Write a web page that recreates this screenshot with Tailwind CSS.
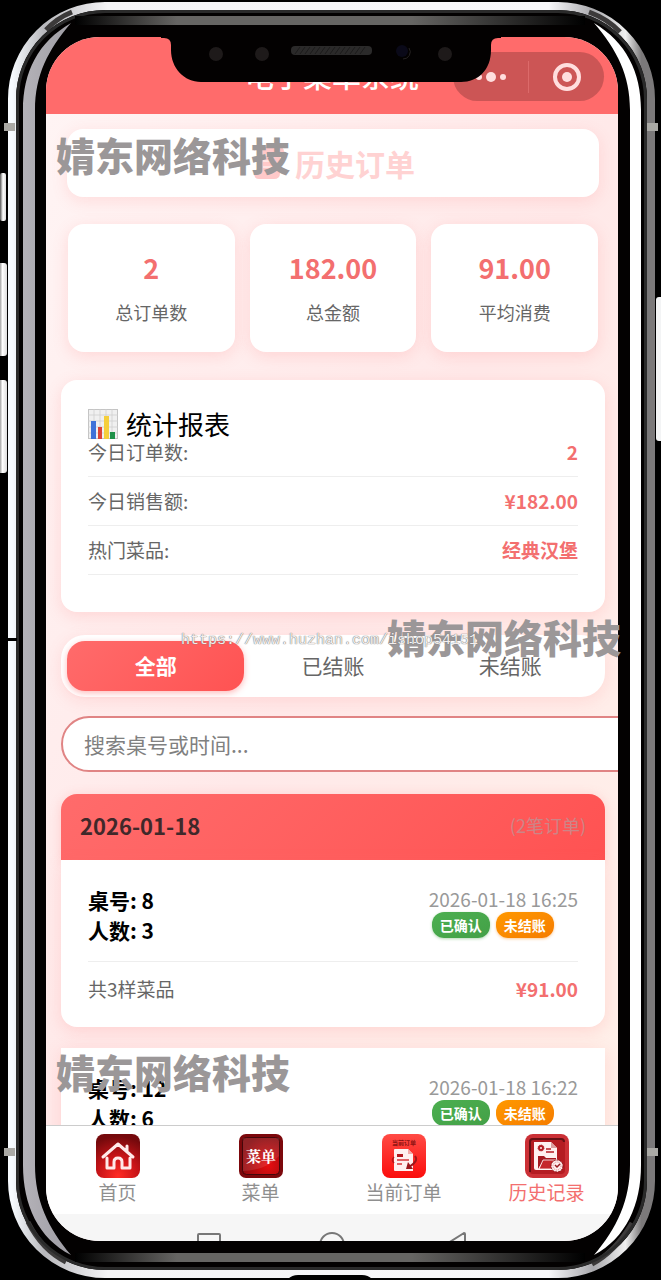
<!DOCTYPE html>
<html lang="zh-CN">
<head>
<meta charset="UTF-8" />
<meta name="viewport" content="width=device-width, initial-scale=1" />
<title>电子菜单系统</title>
<script src="https://cdn.jsdelivr.net/npm/@tailwindcss/browser@4"></script>
</head>
<body class="bg-black font-['Noto_Sans_CJK_SC',sans-serif]">

<div class="relative h-screen overflow-hidden bg-black pt-[37px] pr-[43px] pb-[39px] pl-[46px]">

  <!-- Phone frame -->
  <svg class="absolute inset-0 w-full h-full" viewBox="0 0 661 1280" preserveAspectRatio="none" aria-hidden="true">
    <defs>
      <linearGradient id="ring" x1="0" x2="1">
        <stop offset="0" stop-color="#f7fbff" /><stop offset=".05" stop-color="#b8b8bc" /><stop offset=".15" stop-color="#f4f4f6" />
        <stop offset=".84" stop-color="#f8f8fa" /><stop offset=".91" stop-color="#a8a8ac" /><stop offset=".96" stop-color="#f0f0f0" /><stop offset=".985" stop-color="#7b797a" />
      </linearGradient>
      <linearGradient id="strip" x1="0" x2="1">
        <stop offset="0" stop-color="#000" /><stop offset=".2" stop-color="#666563" />
        <stop offset=".66" stop-color="#666563" /><stop offset="1" stop-color="#000" />
      </linearGradient>
      <linearGradient id="left" x1="0" x2="1">
        <stop offset="0" stop-color="#b4b2b8" /><stop offset="1" stop-color="#9f9da4" />
      </linearGradient>
      <linearGradient id="key" x1="0" x2="1">
        <stop offset="0" stop-color="#555" /><stop offset=".5" stop-color="#fff" /><stop offset="1" stop-color="#ddd" />
      </linearGradient>
    </defs>
    <rect x="12" y="6" width="639" height="1268" rx="93" fill="#030101" stroke="url(#ring)" stroke-width="8" />
    <path d="M46 30Q57 18 72 12M589 12Q608 19 620 32M28 1222Q42 1250 66 1262M632 1223Q615 1252 592 1264" fill="none" stroke="#3c3a3a" stroke-width="5" />
    <rect x="17.500" y="11.500" width="628" height="1257" rx="88" fill="none" stroke="#2a2a2a" stroke-width="3" />
    <rect x="75" y="16" width="510" height="9" fill="url(#strip)" />
    <rect x="75" y="1253" width="510" height="9" fill="url(#strip)" />
    <path d="M71 23C38 42 23 72 23 110V1165C23 1205 38 1238 71 1255C48 1228 35 1200 35 1165V110C35 75 48 50 71 23Z" fill="url(#left)" />
    <path d="M594 23C626 42 641 72 641 110V1165C641 1205 626 1238 594 1255C617 1228 630 1200 630 1165V110C630 75 617 50 594 23Z" fill="#fff" />
    <rect x="0" y="173" width="6" height="48" rx="2" fill="url(#key)" />
    <rect x="-2" y="263" width="9" height="93" rx="3" fill="url(#key)" />
    <rect x="-2" y="380" width="9" height="93" rx="3" fill="url(#key)" />
    <rect x="656" y="297" width="8" height="144" rx="3" fill="#f3f4f5" />
    <path d="M4 123h11v8H4zM647 123h11v8h-11zM4 1148h11v8H4zM647 1148h11v8h-11z" fill="#aaa9a5" />
    <path d="M8 638h9v3H8z" fill="#000" />
    <path d="M288 1279q4-4 10-4h64q6 0 10 4z" fill="#000" />
  </svg>

  <!-- Screen -->
  <div class="relative h-full flex flex-col overflow-hidden rounded-[54px] bg-[#ffefef]">

    <header class="relative shrink-0 h-[77px] bg-[#ff6b6b] flex justify-center">
      <h1 class="pt-[17px] text-[29px] leading-[42px] font-medium text-white">电子菜单系统</h1>

      <!-- Mini program capsule -->
      <div class="absolute right-[14px] top-[15px] w-[151px] h-[49px] rounded-full bg-[#cc5555] flex items-center">
        <button aria-label="更多" class="flex-1 flex justify-center">
          <svg class="w-8 h-6" viewBox="0 0 32 24" fill="#ffdede"><circle cx="4" cy="12" r="3" /><circle cx="16" cy="12" r="5" /><circle cx="28" cy="12" r="3" /></svg>
        </button>
        <span class="w-px h-8 bg-[#dc6a6a]"></span>
        <button aria-label="关闭" class="flex-1 flex justify-center">
          <svg class="w-8 h-8" viewBox="0 0 32 32"><circle cx="16" cy="16" r="12" fill="none" stroke="#ffdede" stroke-width="4" /><circle cx="16" cy="16" r="5" fill="#ffdede" /></svg>
        </button>
      </div>

      <!-- Notch -->
      <svg class="absolute top-0 left-1/2 -translate-x-1/2 -ml-[1px] w-[340px] h-[46px]" viewBox="0 0 340 46" aria-hidden="true">
        <path d="M0 0H340V1H337Q330 1 330 8V13C330 33 317 45 300 45H40C23 45 10 31 10 13V8Q10 1 3 1H0Z" fill="#030101" />
        <g fill="#1e1a1a"><circle cx="55" cy="17" r="7" /><circle cx="101" cy="17" r="7" /><circle cx="284" cy="17" r="7" /></g>
        <rect x="130" y="9" width="81" height="9" rx="4" fill="#2b2a2a" />
        <path d="M134 17l5-7m0 7l5-7m0 7l5-7m0 7l5-7m0 7l5-7m0 7l5-7m0 7l5-7m0 7l5-7m0 7l5-7m0 7l5-7m0 7l5-7m0 7l5-7m0 7l5-7m0 7l5-7" stroke="#1c1b1b" fill="none" />
        <circle cx="241" cy="14" r="6" fill="#0a0918" /><path d="M248 11a7 7 0 0 1-6 11" fill="none" stroke="#262323" />
      </svg>
    </header>

    <main class="flex-1 min-h-0 overflow-hidden pt-[15px] pl-[15px] pr-[13px] bg-linear-to-br from-[#fff4f4] via-[#ffe9e9] to-[#fff0e9]">

      <!-- Page title -->
      <div class="mx-[6px] h-[68px] rounded-2xl bg-white shadow-[0_4px_16px_rgba(255,107,107,0.16)] flex items-center justify-center gap-2">
        <svg class="w-9 h-9" viewBox="-2 0 36 36" aria-hidden="true">
          <path d="M6 2h20q5 0 5 5v3h-4v18q0 6-6 6H6q-5 0-5-6h4V7Q5 3 1 6 2 2 6 2z" fill="#ffc9c9" />
          <path d="M10 10h12M10 16h12M10 22h12" stroke="#ffe3e3" stroke-width="2" />
        </svg>
        <h2 class="text-[30px] leading-9 font-bold text-[#ffd2d2]">历史订单</h2>
      </div>

      <!-- Totals -->
      <div class="mt-[27px] mx-[7px] grid grid-cols-3 gap-[15px] text-center">
        <div class="h-[128px] rounded-2xl bg-white shadow-[0_4px_16px_rgba(255,107,107,0.18)] pt-6">
          <div class="text-[27px] leading-10 font-bold text-[#f36f6f]">2</div>
          <div class="mt-3 text-[18px] leading-6 text-[#666]">总订单数</div>
        </div>
        <div class="h-[128px] rounded-2xl bg-white shadow-[0_4px_16px_rgba(255,107,107,0.18)] pt-6">
          <div class="text-[27px] leading-10 font-bold text-[#f36f6f]">182.00</div>
          <div class="mt-3 text-[18px] leading-6 text-[#666]">总金额</div>
        </div>
        <div class="h-[128px] rounded-2xl bg-white shadow-[0_4px_16px_rgba(255,107,107,0.18)] pt-6">
          <div class="text-[27px] leading-10 font-bold text-[#f36f6f]">91.00</div>
          <div class="mt-3 text-[18px] leading-6 text-[#666]">平均消费</div>
        </div>
      </div>

      <!-- Report -->
      <section class="mt-[28px] rounded-2xl bg-white shadow-[0_4px_16px_rgba(255,107,107,0.18)] px-[27px] pt-[27px] pb-[37px]">
        <div class="flex items-center gap-2 h-[33px]">
          <svg class="w-[30px] h-[30px]" viewBox="0 0 30 30" aria-hidden="true">
            <rect x=".5" y=".5" width="29" height="29" fill="#f0f0f0" stroke="#c4c4c4" />
            <path d="M0 6h30M0 12h30M0 18h30M0 24h30M6 0v30M12 0v30M18 0v30M24 0v30" stroke="#cfcfcf" stroke-width=".8" />
            <path d="M3 12h5v18H3z" fill="#3f72d8" /><path d="M10 18h4v12h-4z" fill="#db4437" />
            <path d="M16 7h5v23h-5z" fill="#f5cf3b" /><path d="M22 23h5v7h-5z" fill="#1f9149" />
          </svg>
          <h3 class="text-[26px] leading-8 text-black">统计报表</h3>
        </div>
        <dl class="text-[19px] leading-6">
          <div class="flex justify-between pb-3 border-b border-[#eee]"><dt class="text-[#666]">今日订单数:</dt><dd class="font-bold text-[#f36f6f]">2</dd></div>
          <div class="flex justify-between py-3 border-b border-[#eee]"><dt class="text-[#666]">今日销售额:</dt><dd class="font-bold text-[#f36f6f]">¥182.00</dd></div>
          <div class="flex justify-between py-3 border-b border-[#eee]"><dt class="text-[#666]">热门菜品:</dt><dd class="font-bold text-[#f36f6f]">经典汉堡</dd></div>
        </dl>
      </section>

      <!-- Filter tabs -->
      <div class="mt-[23px] h-[62px] p-[6px] rounded-[24px] bg-white shadow-[0_4px_16px_rgba(255,107,107,0.15)] grid grid-cols-3 text-[21px]">
        <button class="rounded-[18px] bg-linear-135 from-[#ff6b6b] to-[#ff5252] font-bold text-white shadow-[0_2px_6px_rgba(255,82,82,0.4)]">全部</button>
        <button class="text-[#666]">已结账</button>
        <button class="text-[#666]">未结账</button>
      </div>

      <input type="text" aria-label="搜索桌号或时间" placeholder="搜索桌号或时间..." class="block mt-[19px] w-[calc(100%+48px)] h-[56px] rounded-full border-2 border-[#e08484] bg-white px-[21px] text-[21px] placeholder:text-[#808080]" />

      <!-- Orders of the day -->
      <section class="mt-[22px]">
        <div class="h-[66px] rounded-t-2xl bg-linear-135 from-[#ff6b6b] to-[#ff5252] shadow-[0_2px_12px_rgba(255,107,107,0.25)] px-[19px] pb-1 flex items-center justify-between">
          <h3 class="text-[22px] leading-8 font-bold text-[#40282a]">2026-01-18</h3>
          <span class="text-[18px] leading-8 text-[#cc8587]">(2笔订单)</span>
        </div>

        <article class="rounded-b-2xl bg-white shadow-[0_4px_16px_rgba(255,107,107,0.18)] px-[27px] pt-[25px] pb-[26px]">
          <div class="flex justify-between pb-4 border-b border-[#eee]">
            <div class="text-[21px] leading-[30px] font-bold text-black">
              <p>桌号: 8</p>
              <p>人数: 3</p>
            </div>
            <div class="pt-[2px]">
              <time class="block text-[19px] leading-6 text-[#999]">2026-01-18 16:25</time>
              <div class="flex gap-[6px] pl-[3px] pt-px text-[14px] leading-[26px] font-bold text-white text-center">
                <span class="px-2 rounded-xl bg-linear-to-br from-[#4caf50] to-[#43a047] shadow-[0_1px_3px_rgba(67,160,71,0.4)]">已确认</span>
                <span class="px-2 rounded-xl bg-linear-to-br from-[#ff9800] to-[#f57c00] shadow-[0_1px_3px_rgba(245,124,0,0.4)]">未结账</span>
              </div>
            </div>
          </div>
          <div class="flex justify-between pt-[15px] text-[19px] leading-6">
            <span class="text-[#666]">共3样菜品</span>
            <span class="font-bold text-[#f36f6f]">¥91.00</span>
          </div>
        </article>

        <article class="mt-[21px] bg-white shadow-[0_4px_16px_rgba(255,107,107,0.18)] px-[27px] pt-[25px] pb-[26px]">
          <div class="flex justify-between pb-4 border-b border-[#eee]">
            <div class="text-[21px] leading-[30px] font-bold text-black">
              <p>桌号: 12</p>
              <p>人数: 6</p>
            </div>
            <div class="pt-[2px]">
              <time class="block text-[19px] leading-6 text-[#999]">2026-01-18 16:22</time>
              <div class="flex gap-[6px] pl-[3px] pt-px text-[14px] leading-[26px] font-bold text-white text-center">
                <span class="px-2 rounded-xl bg-linear-to-br from-[#4caf50] to-[#43a047]">已确认</span>
                <span class="px-2 rounded-xl bg-linear-to-br from-[#ff9800] to-[#f57c00]">未结账</span>
              </div>
            </div>
          </div>
        </article>
      </section>
    </main>

    <!-- Tab bar -->
    <nav class="shrink-0 h-[89px] border-t border-[#ccc] bg-white grid grid-cols-4 text-[19px] leading-[26px] text-[#8f8f8f]">
      <a href="#" class="flex flex-col items-center pt-2">
        <svg class="w-11 h-11" viewBox="0 0 44 44" aria-hidden="true">
          <defs><radialGradient id="home" cx=".5" cy=".95" r=".9"><stop offset="0" stop-color="#ff2c25" /><stop offset=".5" stop-color="#c81418" /><stop offset="1" stop-color="#75090c" /></radialGradient></defs>
          <rect width="44" height="44" rx="8" fill="url(#home)" />
          <path d="M7 23L22 10L37 23M31 12V17M11 24V34H18V28Q18 24 22 24Q26 24 26 28V34H34V24" fill="none" stroke="#ffe9e9" stroke-width="3" stroke-linecap="round" stroke-linejoin="round" />
        </svg>
        <span class="mt-[1px]">首页</span>
      </a>
      <a href="#" class="flex flex-col items-center pt-2">
        <svg class="w-11 h-11" viewBox="0 0 44 44" aria-hidden="true">
          <defs><radialGradient id="menu" cx=".7" cy=".75" r=".8"><stop offset="0" stop-color="#e80d10" /><stop offset="1" stop-color="#850a0e" /></radialGradient></defs>
          <rect width="44" height="44" rx="7" fill="#7c080c" />
          <rect x="3.500" y="3.500" width="37" height="37" rx="4" fill="url(#menu)" stroke="#43070a" />
          <path d="M4 4H40V22Q28 36 4 37Z" fill="#fff" opacity=".1" />
          <text x="22" y="28" text-anchor="middle" font-size="15" font-weight="bold" font-family="Noto Serif CJK SC, Noto Sans CJK SC, serif" fill="#fff">菜单</text>
        </svg>
        <span class="mt-[1px]">菜单</span>
      </a>
      <a href="#" class="flex flex-col items-center pt-2">
        <svg class="w-11 h-11" viewBox="0 0 44 44" aria-hidden="true">
          <defs><linearGradient id="cur" x2="0" y2="1"><stop offset="0" stop-color="#ff4b45" /><stop offset="1" stop-color="#fb0d0c" /></linearGradient></defs>
          <rect width="44" height="44" rx="8" fill="url(#cur)" />
          <text x="22" y="11" text-anchor="middle" font-size="6" font-weight="bold" font-family="Noto Sans CJK SC, sans-serif" fill="#8c1212">当前订单</text>
          <path d="M13 15H26L31 20V37H13Q12 37 12 36V16Q12 15 13 15Z" fill="#fff0f0" /><path d="M26 15V20H31Z" fill="#f3aaa8" />
          <path d="M15 20H21V23H15Z" fill="#b41a20" /><path d="M15 26H27M15 30H20" stroke="#e06366" stroke-width="2" />
          <path d="M33 22Q37 27 27 33" fill="none" stroke="#9c171c" stroke-width="2" /><path d="M24 35L26 28L31 35Z" fill="#9c171c" />
          <path d="M12 23Q9 26 12 29" fill="none" stroke="#b5161a" stroke-width="1.500" />
        </svg>
        <span class="mt-[1px]">当前订单</span>
      </a>
      <a href="#" class="flex flex-col items-center pt-2 text-[#f36f6f]">
        <svg class="w-11 h-11" viewBox="0 0 44 44" aria-hidden="true">
          <rect width="44" height="44" rx="8" fill="#cb3036" />
          <rect x="4" y="4" width="36" height="36" rx="4" fill="#b41c22" />
          <path d="M5 38V8Q5 5 8 5H36Q39 5 39 8" fill="none" stroke="#651014" stroke-width="2" />
          <path d="M9 8H26L32 14V36H11Q9 36 9 34Z" fill="#fff1f1" /><path d="M26 8V14H32Z" fill="#dba0a0" />
          <circle cx="16" cy="14" r="2" fill="none" stroke="#b51d24" stroke-width="2" /><circle cx="16" cy="14" r="3" fill="none" stroke="#b51d24" stroke-dasharray="1 1" />
          <path d="M21 15H26M21 18H29" stroke="#b51d24" stroke-width="1.500" />
          <path d="M13 35V22H19L21 24H31V27H18Z" fill="#a51920" /><path d="M14 35L18 26H33L30 35Z" fill="#c5262b" stroke="#fff" stroke-width=".8" />
          <circle cx="32" cy="32" r="6" fill="#fff0f0" stroke="#8c141a" stroke-width="1" stroke-dasharray="2 1" /><circle cx="32" cy="32" r="4" fill="none" stroke="#d88285" stroke-width="1" stroke-dasharray="1 1" />
          <path d="M30 31L32 33L35 30" fill="none" stroke="#981920" stroke-width="1.500" />
        </svg>
        <span class="mt-[1px]">历史记录</span>
      </a>
    </nav>

    <!-- System keys -->
    <div class="shrink-0 h-[27px] overflow-hidden bg-[#f6f6f6] flex justify-center gap-[97px] pt-[18px]">
      <svg class="shrink-0 w-[26px] h-[26px]" viewBox="0 0 26 26" fill="none" stroke="#777" stroke-width="2"><rect x="2" y="2" width="22" height="22" rx="1" /></svg>
      <svg class="shrink-0 w-[26px] h-[26px]" viewBox="0 0 26 26" fill="none" stroke="#777" stroke-width="2"><circle cx="13" cy="13" r="12" /></svg>
      <svg class="shrink-0 w-[26px] h-[26px]" viewBox="0 0 26 26" fill="none" stroke="#777" stroke-width="2"><path d="M22 1L3 13L22 25Q23 25 23 24V2Q23 1 22 1Z" /></svg>
    </div>
  </div>

  <!-- Watermarks -->
  <div class="pointer-events-none">
    <p class="absolute left-[56px] top-[126px] text-[39px] leading-[56px] font-black text-[#9b9798] whitespace-nowrap">婧东网络科技</p>
    <p class="absolute left-[387px] top-[608px] text-[39px] leading-[56px] font-black text-[#9b9798] whitespace-nowrap">婧东网络科技</p>
    <p class="absolute left-[56px] top-[1043px] text-[39px] leading-[56px] font-black text-[#9b9798] whitespace-nowrap">婧东网络科技</p>
    <p class="absolute left-[181px] top-[631px] text-[15px] leading-5 font-['Liberation_Mono',monospace] text-[#f3eeee] text-shadow-[0_0_1px_#777,0_0_1px_#777] whitespace-nowrap">https://www.huzhan.com/ishop54151</p>
  </div>
</div>

</body>
</html>
